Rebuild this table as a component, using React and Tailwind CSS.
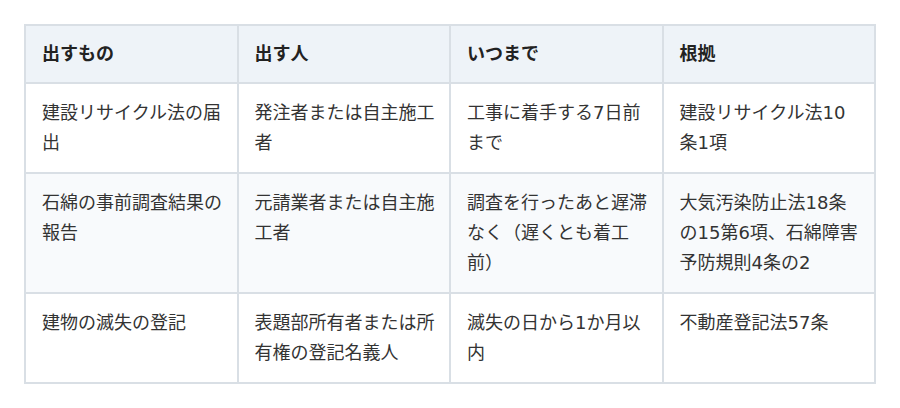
const header = ['出すもの', '出す人', 'いつまで', '根拠'];

const rows = [
  ['建設リサイクル法の届出', '発注者または自主施工者', '工事に着手する7日前まで', '建設リサイクル法10条1項'],
  ['石綿の事前調査結果の報告', '元請業者または自主施工者', '調査を行ったあと遅滞なく（遅くとも着工前）', '大気汚染防止法18条の15第6項、石綿障害予防規則4条の2'],
  ['建物の滅失の登記', '表題部所有者または所有権の登記名義人', '滅失の日から1か月以内', '不動産登記法57条'],
];

export default function App() {
  return (
    <div
      className="w-[900px] h-[408px] bg-white pt-6 pl-6"
      style={{ fontFamily: '"DejaVu Sans", "Noto Sans CJK JP", sans-serif' }}
    >
      <table className="w-[852px] table-fixed border-collapse border-2 border-[#d9dfe5] text-[18px] leading-[30px] text-[#333333]">
        <thead>
          <tr className="bg-[#eef3f8]">
            {header.map((h) => (
              <th
                key={h}
                className="w-1/4 border-2 border-[#d9dfe5] pl-4 pr-3 py-[13px] text-left font-bold text-[#222222]"
              >
                {h}
              </th>
            ))}
          </tr>
        </thead>
        <tbody>
          {rows.map((r, i) => (
            <tr key={i} className={i === 1 ? 'bg-[#f8fafc]' : 'bg-white'}>
              {r.map((c, j) => (
                <td
                  key={j}
                  className="border-2 border-[#d9dfe5] pl-4 pr-3 pt-[14px] pb-[14px] align-top break-all"
                >
                  {c}
                </td>
              ))}
            </tr>
          ))}
        </tbody>
      </table>
    </div>
  );
}
